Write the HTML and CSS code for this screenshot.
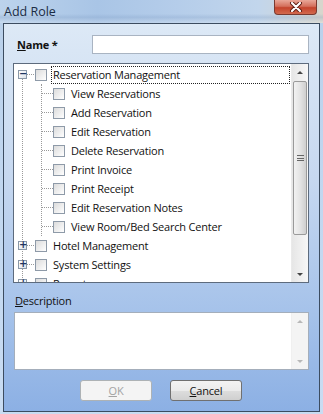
FILE: index.html
```html
<!DOCTYPE html>
<html lang="en">
<head>
  <meta charset="UTF-8">
  <title>Add Role</title>
  <link rel="stylesheet" href="styles.css">
</head>
<body>
  <div class="window">
    <div class="titlebar">
      <span class="title">Add Role</span>
      <div class="close-btn">
        <svg width="14" height="10" viewBox="0 0 14 10">
          <path d="M3 1 L11 9 M11 1 L3 9" stroke="#5a1a10" stroke-width="4" stroke-linecap="round"/>
          <path d="M3 1 L11 9 M11 1 L3 9" stroke="#ffffff" stroke-width="2.2" stroke-linecap="round"/>
        </svg>
      </div>
    </div>

    <div class="client">
      <div class="name-row">
        <label class="name-label"><u>N</u>ame *</label>
        <div class="textbox"></div>
      </div>

      <div class="tree">
        <div class="tree-list">
          <div class="node">
            <div class="row">
              <span class="expander">−</span>
              <span class="hline short"></span>
              <span class="check"></span>
              <span class="label focused">Reservation Management</span>
            </div>
            <div class="children">
              <div class="row child"><span class="hline"></span><span class="check"></span><span class="label">View Reservations</span></div>
              <div class="row child"><span class="hline"></span><span class="check"></span><span class="label">Add Reservation</span></div>
              <div class="row child"><span class="hline"></span><span class="check"></span><span class="label">Edit Reservation</span></div>
              <div class="row child"><span class="hline"></span><span class="check"></span><span class="label">Delete Reservation</span></div>
              <div class="row child"><span class="hline"></span><span class="check"></span><span class="label">Print Invoice</span></div>
              <div class="row child"><span class="hline"></span><span class="check"></span><span class="label">Print Receipt</span></div>
              <div class="row child"><span class="hline"></span><span class="check"></span><span class="label">Edit Reservation Notes</span></div>
              <div class="row child last"><span class="hline"></span><span class="check"></span><span class="label">View Room/Bed Search Center</span></div>
            </div>
          </div>
          <div class="row"><span class="expander">+</span><span class="hline short"></span><span class="check"></span><span class="label">Hotel Management</span></div>
          <div class="row"><span class="expander">+</span><span class="hline short"></span><span class="check"></span><span class="label">System Settings</span></div>
          <div class="row"><span class="expander">+</span><span class="hline short"></span><span class="check"></span><span class="label">Reports</span></div>
        </div>
        <div class="scrollbar">
          <div class="arrow up"></div>
          <div class="thumb"><span class="grip"></span></div>
          <div class="track"></div>
          <div class="arrow down"></div>
        </div>
      </div>

      <label class="desc-label"><u>D</u>escription</label>
      <div class="textarea">
        <div class="scrollbar light">
          <div class="arrow up dim"></div>
          <div class="track"></div>
          <div class="arrow down dim"></div>
        </div>
      </div>

      <div class="buttons">
        <div class="button disabled"><u>O</u>K</div>
        <div class="button"><u>C</u>ancel</div>
      </div>
    </div>
  </div>
</body>
</html>
```

FILE: styles.css
```css
* {
  margin: 0;
  padding: 0;
  box-sizing: border-box;
}

body {
  font-family: 'Open Sans', 'Noto Sans', sans-serif;
  font-size: 11px;
  letter-spacing: -0.2px;
  background: #b7cde6;
  width: 323px;
  height: 414px;
  overflow: hidden;
}

.window {
  width: 323px;
  height: 414px;
  display: flex;
  flex-direction: column;
  background: linear-gradient(180deg, #b9d0ea 0%, #c0d6ef 40%, #c9dcf2 100%);
  padding: 0 3px 2px 3px;
}

/* title bar (glass) */
.titlebar {
  height: 23px;
  display: flex;
  align-items: flex-start;
  justify-content: space-between;
  background:
    linear-gradient(180deg, rgba(255,255,255,0) 0%, rgba(255,255,255,0) 60%, rgba(120,150,190,0.25) 75%, rgba(255,255,255,0.2) 100%),
    linear-gradient(90deg, #bcd3ec 0%, #a9c5e6 30%, #b5cdea 55%, #c2d6ec 80%, #d8d6cc 100%);
  margin: 0 -3px;
  padding: 0 6px 0 4px;
}

.title {
  font-size: 12.5px;
  letter-spacing: 0;
  color: #1b2c44;
  padding-top: 3px;
}

.close-btn {
  width: 43px;
  height: 15px;
  border: 1px solid #7a3a30;
  border-top: none;
  border-radius: 0 0 4px 4px;
  background: linear-gradient(180deg, #e9a798 0%, #d4705c 45%, #c4442c 55%, #d26a4e 100%);
  display: flex;
  align-items: center;
  justify-content: center;
}

/* client area */
.client {
  flex: 1;
  border: 1px solid #3c4c60;
  background: linear-gradient(180deg, #dde9f6 0%, #c6d8f0 40%, #a5c2ea 75%, #8cb0e4 100%);
  padding: 11px 10px 0 9px;
  display: flex;
  flex-direction: column;
}

.name-row {
  display: flex;
  align-items: center;
  justify-content: space-between;
  height: 19px;
}

.name-label {
  font-weight: bold;
  color: #111;
  padding-left: 4px;
}

.textbox {
  width: 217px;
  height: 19px;
  background: #fff;
  border: 1px solid #a9b4c2;
}

/* tree view */
.tree {
  margin-top: 9px;
  width: 296px;
  height: 220px;
  background: #fff;
  border: 1px solid #5d6b7d;
  display: flex;
  overflow: hidden;
}

.tree-list {
  flex: 1;
  padding-top: 1px;
  overflow: hidden;
  position: relative;
}

/* root level guide line */
.tree-list::before {
  content: '';
  position: absolute;
  left: 8px;
  top: 10px;
  bottom: 0;
  border-left: 1px dotted #9a9a9a;
}

.row {
  display: flex;
  align-items: center;
  height: 19px;
  padding-left: 4px;
  white-space: nowrap;
  color: #111;
  position: relative;
}

.expander {
  width: 9px;
  height: 9px;
  border: 1px solid #8a98a8;
  background: linear-gradient(135deg, #ffffff 0%, #dde3ea 100%);
  font-size: 10px;
  line-height: 6px;
  text-align: center;
  color: #1e3460;
  font-family: 'DejaVu Sans', sans-serif;
  font-weight: bold;
  letter-spacing: 0;
  position: relative;
}

.hline {
  width: 11px;
  border-top: 1px dotted #9a9a9a;
}

.hline.short {
  width: 7px;
  margin-right: 1px;
}

.check {
  width: 12px;
  height: 12px;
  border: 1px solid #8e9aa8;
  background: linear-gradient(135deg, #dcdcdc 0%, #f4f4f4 70%, #ffffff 100%);
  flex-shrink: 0;
}

.label {
  margin-left: 4px;
  padding: 0 2px 1px 1px;
  border: 1px dotted transparent;
}

.label.focused {
  flex: 1;
  border-color: #222;
  margin-right: 1px;
}

.children {
  margin-left: 27px;
  border-left: 1px dotted #9a9a9a;
  height: 152px;
}

.row.child {
  padding-left: 0;
}

/* scrollbars */
.scrollbar {
  width: 17px;
  display: flex;
  flex-direction: column;
  background: linear-gradient(90deg, #e6e6e6, #f7f7f7);
  border-left: 1px solid #eaeaea;
}

.arrow {
  height: 17px;
  position: relative;
}

.arrow::after {
  content: '';
  position: absolute;
  left: 5px;
  border-left: 3px solid transparent;
  border-right: 3px solid transparent;
}

.arrow.up::after {
  top: 7px;
  border-bottom: 3px solid #444;
}

.arrow.down::after {
  top: 8px;
  border-top: 3px solid #444;
}

.arrow.dim.up::after {
  border-bottom-color: #b8b8b8;
}

.arrow.dim.down::after {
  border-top-color: #b8b8b8;
}

.thumb {
  height: 154px;
  margin: 0 1px;
  border: 1px solid #9a9a9a;
  border-radius: 2px;
  background: linear-gradient(90deg, #f2f2f2 0%, #e4e4e4 50%, #cfcfcf 100%);
  display: flex;
  align-items: center;
  justify-content: center;
}

.grip {
  width: 7px;
  height: 6px;
  border-top: 1px solid #666;
  border-bottom: 1px solid #666;
  position: relative;
}

.grip::after {
  content: '';
  position: absolute;
  left: 0;
  right: 0;
  top: 1.5px;
  border-top: 1px solid #666;
}

.track {
  flex: 1;
}

.desc-label {
  margin-top: 10px;
  padding-left: 2px;
  color: #111;
  height: 16px;
}

.textarea {
  margin-top: 3px;
  margin-left: 1px;
  width: 295px;
  height: 58px;
  background: #fff;
  border: 1px solid #a4aebb;
  display: flex;
  justify-content: flex-end;
}

.scrollbar.light {
  background: #f4f4f4;
  border-left: 1px solid #f0f0f0;
}

.buttons {
  display: flex;
  justify-content: center;
  gap: 18px;
  margin-top: 10px;
}

.button {
  width: 72px;
  height: 21px;
  border: 1px solid #707070;
  border-radius: 3px;
  background: linear-gradient(180deg, #f3f3f3 0%, #ebebeb 50%, #dddddd 51%, #cfcfcf 100%);
  display: flex;
  align-items: center;
  justify-content: center;
  color: #111;
}

.button.disabled {
  border-color: #adb2b5;
  background: #f4f4f4;
  color: #a3a3a3;
}
```
